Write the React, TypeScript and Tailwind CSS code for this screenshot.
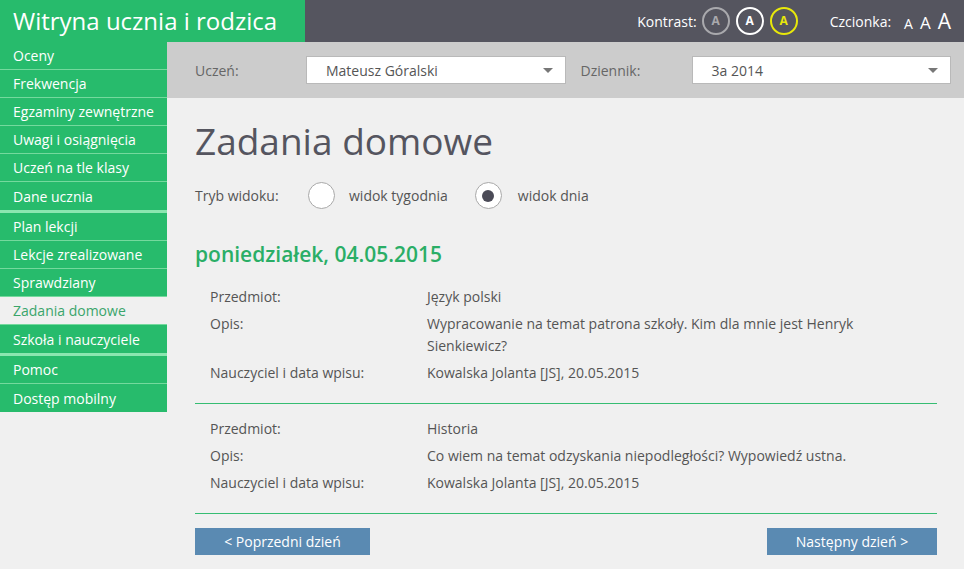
import React from "react"

const menuGroups = [
    ["Oceny", "Frekwencja", "Egzaminy zewnętrzne", "Uwagi i osiągnięcia", "Uczeń na tle klasy", "Dane ucznia"],
    ["Plan lekcji", "Lekcje zrealizowane", "Sprawdziany", "Zadania domowe", "Szkoła i nauczyciele"],
    ["Pomoc", "Dostęp mobilny"],
]

const entries = [
    {
        subject: "Język polski",
        desc: "Wypracowanie na temat patrona szkoły. Kim dla mnie jest Henryk Sienkiewicz?",
        teacher: "Kowalska Jolanta [JS], 20.05.2015",
    },
    {
        subject: "Historia",
        desc: "Co wiem na temat odzyskania niepodległości? Wypowiedź ustna.",
        teacher: "Kowalska Jolanta [JS], 20.05.2015",
    },
]

function Select({ value }: { value: string }) {
    return (
        <div className="flex h-[28px] flex-1 items-center justify-between border border-[#b9b9b9] bg-white pl-[19px] pr-[12px] text-[14px] text-[#555]">
            <span>{value}</span>
            {/* small caret */}
            <span className="h-0 w-0 border-x-[5px] border-t-[5px] border-x-transparent border-t-[#777]" />
        </div>
    )
}

function Radio({ checked, label }: { checked?: boolean; label: string }) {
    return (
        <div className="flex items-center">
            <span className="flex h-[27px] w-[27px] items-center justify-center rounded-full border border-[#a8a8a8] bg-white">
                {checked && <span className="h-[12px] w-[12px] rounded-full bg-[#4b4b57]" />}
            </span>
            <span className={checked ? "ml-[16px]" : "ml-[14px]"}>{label}</span>
        </div>
    )
}

export default function App() {
    return (
        <div className="flex h-[569px] w-[964px] flex-col overflow-hidden bg-[#f0f0f0] font-['Open_Sans',sans-serif] text-[14px] text-[#555]">
            {/* Top bar */}
            <div className="flex h-[42px] shrink-0">
                <div className="flex w-[305px] items-center bg-[#27bb6c] pl-[13px] text-[24px] text-white">
                    Witryna ucznia i rodzica
                </div>
                <div className="flex flex-1 items-center justify-end bg-[#55555f] pr-[13px] text-white">
                    <span className="mr-[5px]">Kontrast:</span>
                    <div className="flex gap-[6px]">
                        <span className="flex h-[28px] w-[28px] items-center justify-center rounded-full border-2 border-[#a9a9ad] text-[12px] font-bold text-[#a9a9ad]">A</span>
                        <span className="flex h-[28px] w-[28px] items-center justify-center rounded-full border-2 border-white text-[12px] font-bold text-white">A</span>
                        <span className="flex h-[28px] w-[28px] items-center justify-center rounded-full border-2 border-[#e8e80a] text-[12px] font-bold text-[#e8e80a]">A</span>
                    </div>
                    <span className="ml-[32px] mr-[13px]">Czcionka:</span>
                    <div className="flex items-baseline gap-[7px] leading-none">
                        <span className="text-[14px]">A</span>
                        <span className="text-[17px]">A</span>
                        <span className="text-[21px]">A</span>
                    </div>
                </div>
            </div>

            <div className="flex flex-1">
                {/* Sidebar */}
                <nav className="flex w-[167px] shrink-0 flex-col self-start">
                    {menuGroups.map((group, gi) => (
                        <div key={gi} className={gi > 0 ? "border-t-[3px] border-[#8be6b0]" : ""}>
                            {group.map((item, i) => {
                                const active = item === "Zadania domowe"
                                return (
                                    <div
                                        key={item}
                                        className={
                                            "flex h-[28px] items-center pl-[13px] " +
                                            (i < group.length - 1 ? "border-b border-[#74d99d] " : "") +
                                            (active ? "bg-[#f0f0f0] text-[#3aa56b]" : "bg-[#27bb6c] text-white")
                                        }
                                    >
                                        {item}
                                    </div>
                                )
                            })}
                        </div>
                    ))}
                </nav>

                {/* Main */}
                <main className="flex flex-1 flex-col">
                    <div className="flex h-[56px] items-center bg-[#cccccc] pl-[28px] pr-[13px] text-[#666]">
                        <span className="w-[111px]">Uczeń:</span>
                        <Select value="Mateusz Góralski" />
                        <span className="ml-[15px] w-[111px]">Dziennik:</span>
                        <Select value="3a 2014" />
                    </div>

                    <div className="px-[28px] pr-[27px]">
                        <h1 className="mt-[19px] text-[37px] leading-[48px] text-[#55555f]">Zadania domowe</h1>

                        <div className="mt-[17px] flex items-center">
                            <span className="w-[113px]">Tryb widoku:</span>
                            <Radio label="widok tygodnia" />
                            <div className="ml-[27px]">
                                <Radio checked label="widok dnia" />
                            </div>
                        </div>

                        <h2 className="mt-[31px] text-[21px] font-semibold leading-[29px] text-[#2aae66]">
                            poniedziałek, 04.05.2015
                        </h2>

                        <div className="mt-[3px]">
                            {entries.map((e, i) => (
                                <div key={i}>
                                    <div className="flex flex-col gap-[5px] pb-[19px] pl-[15px] pr-[40px] pt-[14px] leading-[22px]">
                                        <div className="grid grid-cols-[217px_1fr]">
                                            <span>Przedmiot:</span>
                                            <span>{e.subject}</span>
                                        </div>
                                        <div className="grid grid-cols-[217px_1fr]">
                                            <span>Opis:</span>
                                            <span>{e.desc}</span>
                                        </div>
                                        <div className="grid grid-cols-[217px_1fr]">
                                            <span>Nauczyciel i data wpisu:</span>
                                            <span>{e.teacher}</span>
                                        </div>
                                    </div>
                                    <div className="h-px bg-[#35bd72]" />
                                </div>
                            ))}
                        </div>

                        <div className="mt-[14px] flex justify-between">
                            <button className="h-[27px] w-[175px] bg-[#5a8ab2] text-[14px] text-white">&lt; Poprzedni dzień</button>
                            <button className="h-[27px] w-[170px] bg-[#5a8ab2] text-[14px] text-white">Następny dzień &gt;</button>
                        </div>
                    </div>
                </main>
            </div>
        </div>
    )
}
